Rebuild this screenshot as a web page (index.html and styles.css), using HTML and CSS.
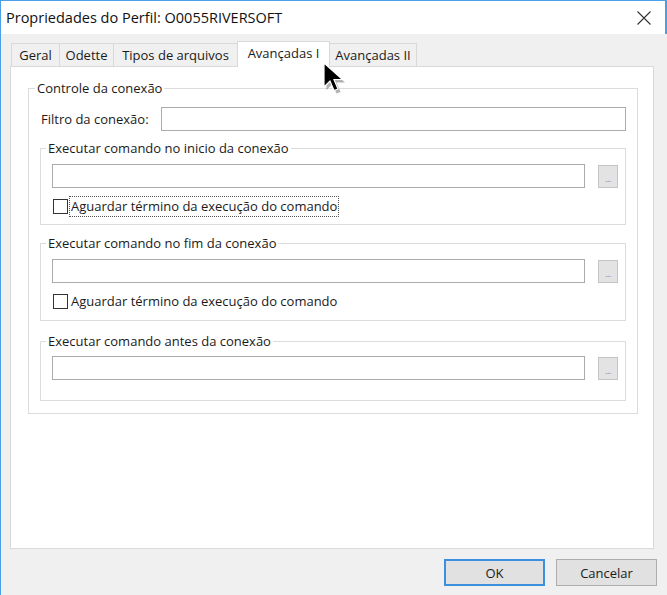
FILE: index.html
```html
<!DOCTYPE html>
<html lang="pt">
<head>
<meta charset="utf-8">
<title>Propriedades do Perfil</title>
<link rel="stylesheet" href="styles.css">
</head>
<body>
<div class="window">
  <div class="titlebar">
    <span class="title">Propriedades do Perfil: O0055RIVERSOFT</span>
    <svg class="close" width="14" height="14" viewBox="0 0 14 14" aria-label="Fechar">
      <path d="M0.5 0.5 L13.5 13.5 M13.5 0.5 L0.5 13.5" stroke="#333" stroke-width="1.1" fill="none"/>
    </svg>
  </div>
  <div class="client">
    <div class="tabs">
      <div class="tab t-geral">Geral</div>
      <div class="tab t-odette">Odette</div>
      <div class="tab t-tipos">Tipos de arquivos</div>
      <div class="tab active">Avançadas I</div>
      <div class="tab t-av2">Avançadas II</div>
    </div>
    <div class="page">
      <fieldset class="group outer">
        <legend>Controle da conexão</legend>
        <div class="filter-row">
          <span class="label">Filtro da conexão:</span>
          <div class="input filter-input"></div>
        </div>
        <fieldset class="group sub g1">
          <legend>Executar comando no inicio da conexão</legend>
          <div class="cmd-row">
            <div class="input cmd-input"></div>
            <div class="browse">...</div>
          </div>
          <div class="check-row">
            <span class="box"></span>
            <span class="check-label focused">Aguardar término da execução do comando</span>
          </div>
        </fieldset>
        <fieldset class="group sub g2">
          <legend>Executar comando no fim da conexão</legend>
          <div class="cmd-row">
            <div class="input cmd-input"></div>
            <div class="browse">...</div>
          </div>
          <div class="check-row">
            <span class="box"></span>
            <span class="check-label">Aguardar término da execução do comando</span>
          </div>
        </fieldset>
        <fieldset class="group sub g3">
          <legend>Executar comando antes da conexão</legend>
          <div class="cmd-row">
            <div class="input cmd-input"></div>
            <div class="browse">...</div>
          </div>
        </fieldset>
      </fieldset>
    </div>
    <div class="footer">
      <button class="btn default">OK</button>
      <button class="btn">Cancelar</button>
    </div>
  </div>
  <svg class="cursor" width="28" height="34" viewBox="0 0 28 34" aria-hidden="true">
    <path d="M3.5 3.5 L3.5 28 L9.5 22 L13.5 31.5 L17.5 30 L13.5 20.5 L22 20.5 Z" fill="rgba(0,0,0,0.3)"/>
    <path d="M1 1 L1 25 L7 19 L11 28.5 L15 27 L11 17.5 L19.5 17.5 Z" fill="#000" stroke="#fff" stroke-width="1.2" stroke-linejoin="miter"/>
  </svg>
</div>
</body>
</html>
```
FILE: styles.css
```css
* { box-sizing: border-box; }
html, body { margin: 0; padding: 0; }
body {
  width: 667px;
  height: 595px;
  overflow: hidden;
  background: #f0f0f0;
  font-family: "Open Sans", "Noto Sans", "Liberation Sans", sans-serif;
  font-size: 13px;
  color: #1a1a1a;
}
.window {
  position: relative;
  width: 667px;
  height: 595px;
  border-left: 1px solid #4a9fe6;
  display: flex;
  flex-direction: column;
  background: #f0f0f0;
}
.titlebar {
  height: 34px;
  flex: none;
  background: #fff;
  border-top: 1px solid #4a9fe6;
  border-right: 2px solid #4a9fe6;
  display: flex;
  align-items: center;
  padding-left: 5px;
  padding-right: 14px;
}
.title {
  font-size: 14.5px;
  color: #111;
}
.close { margin-left: auto; }
.client {
  flex: 1;
  display: flex;
  flex-direction: column;
  padding: 7px 13px 0 9px;
}
.tabs {
  display: flex;
  height: 26px;
  margin-left: 1px;
  position: relative;
  z-index: 1;
}
.tab {
  height: 23px;
  margin-top: 2px;
  border: 1px solid #d9d9d9;
  border-bottom: none;
  border-right: none;
  background: #f0f0f0;
  display: flex;
  align-items: center;
  justify-content: center;
  white-space: nowrap;
  color: #1a1a1a;
}
.t-geral { width: 48px; }
.t-odette { width: 54px; }
.t-tipos { width: 124px; }
.tab.active {
  width: 93px;
  height: 26px;
  margin-top: 0;
  background: #fff;
  border-right: 1px solid #d9d9d9;
  padding-bottom: 3px;
}
.t-av2 { width: 87px; border-left: none; border-right: 1px solid #d9d9d9; }
.page {
  height: 483px;
  margin-top: -1px;
  background: #fff;
  border: 1px solid #d9d9d9;
  padding: 13px 15px 0 17px;
}
.group {
  margin: 0;
  border: 1px solid #dcdcdc;
  min-width: 0;
}
.group legend {
  padding: 0 2px;
  line-height: 16px;
  height: 16px;
}
.outer {
  padding: 11px 11px 12px 11px;
}
.outer > legend { margin-left: -5px; }
.sub > legend { margin-left: -6px; }
.filter-row {
  display: flex;
  align-items: center;
  height: 24px;
  padding-left: 1px;
}
.label { width: 120px; }
.input {
  height: 24px;
  background: #fff;
  border: 1px solid #ababab;
}
.filter-input { flex: 1; }
.sub { padding: 8px 7px 0 11px; }
.g1 { margin-top: 9px; height: 85px; }
.g2 { margin-top: 10px; height: 86px; }
.g3 { margin-top: 12px; height: 68px; padding-top: 7px; }
.cmd-row {
  display: flex;
  align-items: flex-start;
}
.cmd-input { width: 533px; }
.browse {
  margin-left: 13px;
  margin-top: 1px;
  width: 20px;
  height: 23px;
  border: 1px solid #c4c4c4;
  background: #e3e3e3;
  color: #8a8a8a;
  font-size: 9px;
  line-height: 1;
  display: flex;
  align-items: center;
  justify-content: center;
  padding-top: 3px;
  letter-spacing: -0.5px;
}
.check-row {
  display: flex;
  align-items: center;
  height: 21px;
  margin-top: 8px;
}
.box {
  width: 15px;
  height: 15px;
  border: 1px solid #333;
  background: #fff;
  margin-left: 1px;
  flex: none;
}
.check-label {
  margin-left: 1px;
  padding: 1px 1px;
  border: 1px dotted transparent;
  line-height: 17px;
}
.check-label.focused { border-color: #555; }
.footer {
  display: flex;
  justify-content: flex-end;
  gap: 11px;
  margin-top: 10px;
  margin-right: -3px;
}
.btn {
  width: 101px;
  height: 27px;
  font: inherit;
  color: #1a1a1a;
  background: #e1e1e1;
  border: 1px solid #adadad;
  padding: 0;
}
.btn.default { border: 2px solid #3c8fdc; }
.cursor {
  position: absolute;
  left: 322px;
  top: 62px;
  z-index: 5;
}
```
